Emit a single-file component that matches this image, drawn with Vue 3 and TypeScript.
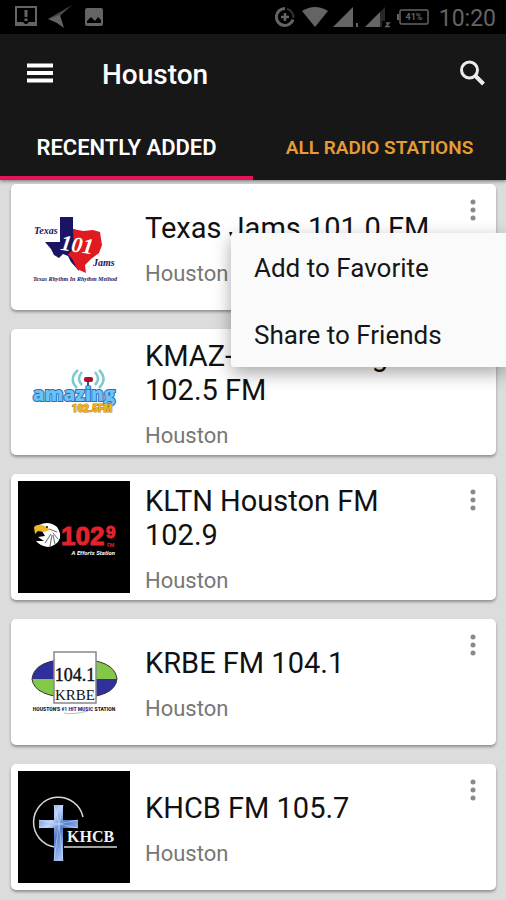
<script setup lang="ts">
import { ref } from 'vue'

type LogoName = 'texas' | 'amazing' | 'eagle' | 'krbe' | 'khcb'

interface Station {
  id: number
  name: string
  city: string
  logo: LogoName
  dark: boolean
}

const stations: Station[] = [
  { id: 1, name: 'Texas Jams 101.0 FM', city: 'Houston', logo: 'texas', dark: false },
  { id: 2, name: 'KMAZ-LP Amazing 102.5 FM', city: 'Houston', logo: 'amazing', dark: false },
  { id: 3, name: 'KLTN Houston FM 102.9', city: 'Houston', logo: 'eagle', dark: true },
  { id: 4, name: 'KRBE FM 104.1', city: 'Houston', logo: 'krbe', dark: false },
  { id: 5, name: 'KHCB FM 105.7', city: 'Houston', logo: 'khcb', dark: true },
]

const tabs = ['Recently added', 'All radio stations']
const activeTab = ref(0)
const openMenu = ref<number | null>(1)

function toggleMenu(id: number): void {
  openMenu.value = openMenu.value === id ? null : id
}
</script>

<template>
  <div class="app">
    <div class="status">
      <div class="status-group left">
        <svg width="24" height="24" viewBox="0 0 24 24">
          <path d="M2 2h20v18H2z" fill="none" stroke="currentColor" stroke-width="2" />
          <path d="M2 17h7l3 3 3-3h7v4H2z" fill="currentColor" />
          <path d="M10.500 5h3v7h-3zM10.500 13.500h3v2.500h-3z" fill="currentColor" />
        </svg>
        <svg width="24" height="24" viewBox="0 0 24 24">
          <path d="M0 14 24 0 12 11z" fill="currentColor" opacity=".7" />
          <path d="M0 14 12 10 16 23 9 18z" fill="currentColor" />
        </svg>
        <svg width="24" height="24" viewBox="0 0 24 24">
          <path fill-rule="evenodd" d="M5 3h14a2 2 0 0 1 2 2v14a2 2 0 0 1-2 2H5a2 2 0 0 1-2-2V5a2 2 0 0 1 2-2zM5 18h14v-3l-3-3-3 4-4-4-4 4z" fill="currentColor" />
        </svg>
      </div>
      <div class="status-group right">
        <svg width="22" height="24" viewBox="0 0 22 24">
          <path d="M10 3.500a8.500 8.500 0 1 0 8 11" fill="none" stroke="currentColor" stroke-width="3" />
          <path d="M12 4a8.500 8.500 0 0 1 6.500 9" fill="none" stroke="currentColor" stroke-width="2" opacity=".5" />
          <path d="M10 8v8M6 12h8" stroke="currentColor" stroke-width="2.500" />
        </svg>
        <svg width="26" height="24" viewBox="0 0 26 24">
          <path d="M0 6Q13-2 26 6L13 22z" fill="currentColor" />
        </svg>
        <svg width="27" height="24" viewBox="0 0 27 24">
          <path d="M0 22 20 2v20z" fill="currentColor" />
          <path d="M24 18v4" stroke="currentColor" stroke-width="2" />
        </svg>
        <svg width="27" height="24" viewBox="0 0 27 24">
          <path d="M0 22 15 7v15z" fill="currentColor" />
          <path d="M15 7 20 2v14h-3v6h-2z" fill="currentColor" opacity=".4" />
          <path d="M21 18h3L21 21.500h4" fill="none" stroke="currentColor" stroke-width="1.500" />
        </svg>
        <svg width="32" height="24" viewBox="0 0 32 24">
          <rect x="3" y="5" width="28" height="14" rx="1.500" fill="none" stroke="currentColor" stroke-width="1.500" />
          <path d="M1 9v6" stroke="currentColor" stroke-width="2" />
          <text x="17" y="15" text-anchor="middle" font-size="9" font-weight="700" fill="currentColor">41%</text>
        </svg>
        <span class="clock">10:20</span>
      </div>
    </div>

    <header class="header">
      <div class="toolbar">
        <button class="icon-button" type="button" aria-label="Open navigation">
          <svg width="28" height="28" viewBox="0 0 28 28">
            <path d="M1 6.500h26M1 14h26M1 21.500h26" stroke="#fff" stroke-width="4" />
          </svg>
        </button>
        <h1 class="title">Houston</h1>
        <button class="icon-button" type="button" aria-label="Search">
          <svg width="28" height="28" viewBox="0 0 28 28">
            <circle cx="11.500" cy="11" r="8" fill="none" stroke="#ececec" stroke-width="3" />
            <path d="m17 16.500 8.500 8.500" stroke="#ececec" stroke-width="4" />
          </svg>
        </button>
      </div>
      <nav class="tabs">
        <button
          v-for="(tab, index) in tabs"
          :key="tab"
          type="button"
          class="tab"
          :class="{ active: activeTab === index }"
          @click="activeTab = index"
        >
          {{ tab }}
        </button>
      </nav>
    </header>

    <main class="list">
      <article v-for="station in stations" :key="station.id" class="card">
        <div class="logo" :class="{ dark: station.dark }">
          <svg v-if="station.logo === 'texas'" viewBox="0 0 112 112">
            <path d="M42 26h13v12l6 2v40l-8-9-3-6-5-2-4 4-5-3-3-6-6-7h15z" fill="#1b1464" />
            <path d="M55 38l10 2 10-1 7 2 2 13-3 8-8 6-6 6 1 8-9-4-4-9-5-6 6-5z" fill="#e01a20" />
            <text x="59" y="61" text-anchor="middle" class="serif" font-size="22" font-style="italic" font-weight="700" fill="#fff" transform="rotate(8 59 54)">101</text>
            <text x="16" y="43" class="script" font-size="10" fill="#1b1464">Texas</text>
            <text x="75" y="75" class="script" font-size="10" fill="#1b1464">Jams</text>
            <text x="57" y="90" text-anchor="middle" class="script" font-size="6" fill="#1b1464">Texas Rhythm In Rhythm Method</text>
          </svg>

          <svg v-else-if="station.logo === 'amazing'" viewBox="0 0 112 112">
            <g fill="none" stroke="#7cc9d0" stroke-width="2.500">
              <path d="M64 49q-6-6 0-13M59 52q-9-9 1-18M77 49q6-6 0-13M81 52q9-9 0-18" />
            </g>
            <path d="M70 44v10" stroke="#245a9c" stroke-width="2" />
            <rect x="66" y="41" width="9" height="5" rx="2" fill="#b01023" />
            <text x="56" y="65" text-anchor="middle" class="amazing">amazing</text>
            <text x="74" y="76" text-anchor="middle" class="frequency">102.5FM</text>
          </svg>

          <svg v-else-if="station.logo === 'eagle'" viewBox="0 0 112 112">
            <path d="M21 44q10-5 18 2 4 6 3 11-3 8-12 9-8-1-12-6l8 0-6-4 7-1-3-5z" fill="#fff" />
            <path d="m27 62 6-9M32 65l2-11M37 63l-2-9M40 58l-5-6M39 51l-8-3" stroke="#666" stroke-width="1" />
            <path d="M16 46q5-5 14 1l2 2-6 2-6-1-3 3z" fill="#eeb62a" />
            <circle cx="29" cy="46" r="1" fill="#111" />
            <text x="43" y="64" class="red-digits" font-size="26">102</text>
            <text x="88" y="57" class="red-digits" font-size="17">9</text>
            <text x="89" y="66" font-size="5" font-weight="700" fill="#e3222b">FM</text>
            <text x="97" y="74" text-anchor="end" font-size="6" font-weight="700" font-style="italic" fill="#fff">A Efforts Station</text>
          </svg>

          <svg v-else-if="station.logo === 'krbe'" viewBox="0 0 112 112">
            <path d="M56 33v20H14Q16 33 56 33z" fill="#30309a" />
            <path d="M14 53h42v19Q16 71 14 53z" fill="#83c847" />
            <path d="M56 33q41 0 43 20H56z" fill="#83c847" />
            <path d="M56 53h43q-2 19-43 19z" fill="#30309a" />
            <path d="M14 53Q16 33 56 33q41 0 43 20-2 19-43 19Q16 71 14 53z" fill="none" stroke="#333" stroke-width="1" />
            <rect x="36" y="26" width="42" height="51" fill="#fff" stroke="#888" stroke-width="1.500" />
            <text x="57" y="55" text-anchor="middle" class="serif" font-size="18" fill="#111" stroke="#111" stroke-width=".4">104.1</text>
            <text x="57" y="74" text-anchor="middle" class="serif" font-size="15" fill="#111">KRBE</text>
            <path d="M46 87q8 2 24-2" fill="none" stroke="#a2d58d" stroke-width="1" />
            <text x="56" y="85" text-anchor="middle" font-size="5" font-weight="900" fill="#222">HOUSTON'S <tspan fill="#30309a">#1 HIT MUSIC</tspan> STATION</text>
          </svg>

          <svg v-else viewBox="0 0 112 112">
            <defs>
              <linearGradient id="cross-fill" x1="0" y1="0" x2="1" y2="1">
                <stop offset="0" stop-color="#5a83d0" />
                <stop offset=".3" stop-color="#bcd3fa" />
                <stop offset=".5" stop-color="#527ac5" />
                <stop offset=".75" stop-color="#a5c2f5" />
                <stop offset="1" stop-color="#5276bb" />
              </linearGradient>
            </defs>
            <path d="M65 46A25 25 0 1 0 37 76" fill="none" stroke="#d8d8d8" stroke-width="1.500" />
            <path d="M36 34h9v15h15v8H45v33h-9V57H21v-8h15z" fill="url(#cross-fill)" />
            <path d="m36 34 5 19 4-19M21 49l20 4-20 4M60 49l-19 4 19 4M36 90l5-37 4 37" fill="none" stroke="#dce8ff" stroke-width="1" opacity=".5" />
            <text x="49" y="71" class="serif" font-size="16" font-weight="700" fill="#f1f1f1">KHCB</text>
            <path d="M46 76h53" stroke="#d8d8d8" stroke-width="1.500" />
          </svg>
        </div>

        <div class="details">
          <h2 class="name">{{ station.name }}</h2>
          <p class="city">{{ station.city }}</p>
        </div>

        <button class="more" type="button" :aria-label="`Options for ${station.name}`" @click="toggleMenu(station.id)">
          <svg width="6" height="22" viewBox="0 0 6 22">
            <g fill="#8a8a8a">
              <circle cx="3" cy="3" r="2.500" />
              <circle cx="3" cy="11" r="2.500" />
              <circle cx="3" cy="19" r="2.500" />
            </g>
          </svg>
        </button>

        <div v-if="openMenu === station.id" class="menu">
          <button type="button" class="menu-item" @click="openMenu = null">Add to Favorite</button>
          <button type="button" class="menu-item" @click="openMenu = null">Share to Friends</button>
        </div>
      </article>
    </main>
  </div>
</template>

<style>
body {
  margin: 0;
  background: #dcdcdc;
}
</style>

<style scoped>
.app {
  min-height: 100vh;
  background: #dcdcdc;
  font-family: Roboto, "Liberation Sans", sans-serif;
  overflow-x: hidden;
}

button {
  border: 0;
  padding: 0;
  background: none;
  font: inherit;
  color: inherit;
  cursor: pointer;
}

svg {
  display: block;
}

.status {
  display: flex;
  justify-content: space-between;
  align-items: center;
  height: 34px;
  padding: 0 10px 0 14px;
  background: #000;
  color: #646464;
}

.status-group {
  display: flex;
  align-items: center;
}

.left {
  gap: 10px;
}

.right {
  gap: 5px;
}

.clock {
  margin-left: 5px;
  padding-top: 3px;
  font-size: 23px;
  line-height: 31px;
}

.header {
  position: relative;
  background: #171717;
  color: #fff;
  box-shadow: 0 1px 4px rgba(0, 0, 0, 0.5);
}

.toolbar {
  display: flex;
  align-items: center;
  height: 78px;
  padding: 0 20px 0 26px;
}

.title {
  flex: 1;
  margin: 0 0 0 48px;
  padding-top: 4px;
  font-size: 28px;
  font-weight: 500;
  line-height: 36px;
}

.tabs {
  display: grid;
  grid-template-columns: 1fr 1fr;
}

.tab {
  height: 68px;
  padding-top: 6px;
  border-bottom: 4px solid transparent;
  font-size: 19px;
  font-weight: 600;
  text-transform: uppercase;
  white-space: nowrap;
  color: #e69c35;
}

.tab.active {
  border-bottom-color: #e6135a;
  font-size: 22px;
  color: #fff;
}

.list {
  display: flex;
  flex-direction: column;
  gap: 19px;
  padding: 4px 10px 10px 11px;
}

.card {
  position: relative;
  display: flex;
  align-items: center;
  min-height: 126px;
  border-radius: 5px;
  background: #fff;
  box-shadow: 0 2px 3px rgba(0, 0, 0, 0.35);
}

.logo {
  flex: none;
  width: 112px;
  height: 112px;
  margin-left: 7px;
}

.logo.dark {
  background: #000;
}

.serif {
  font-family: "Liberation Serif", serif;
}

.script {
  font-family: "Liberation Serif", serif;
  font-style: italic;
  font-weight: 700;
}

.red-digits {
  font-family: "Liberation Sans", sans-serif;
  font-weight: 700;
  fill: #e3222b;
  stroke: #e3222b;
  stroke-width: 1px;
}

.amazing {
  font-family: "Open Sans", sans-serif;
  font-size: 19px;
  font-weight: 800;
  fill: #6fc0f3;
  stroke: #2a70b4;
  stroke-width: 2px;
  paint-order: stroke;
}

.frequency {
  font-size: 10px;
  font-weight: 900;
  fill: #f5b51d;
  stroke: #b17b12;
  stroke-width: 1px;
  paint-order: stroke;
}

.details {
  flex: 1;
  padding: 2px 52px 0 15px;
}

.name {
  margin: 0;
  font-size: 29px;
  font-weight: 400;
  line-height: 34px;
  color: #111;
}

.city {
  margin: 17px 0 0;
  font-size: 22px;
  line-height: 24px;
  color: #777;
}

.more {
  position: absolute;
  top: 8px;
  right: 12px;
  display: grid;
  place-items: center;
  width: 22px;
  height: 36px;
}

.menu {
  position: absolute;
  z-index: 2;
  top: 49px;
  right: -10px;
  left: 220px;
  border-radius: 3px 0 0 3px;
  background: #fafafa;
  box-shadow: 0 6px 18px rgba(0, 0, 0, 0.35);
}

.menu-item {
  display: block;
  width: 100%;
  height: 67px;
  padding: 2px 23px 0;
  text-align: left;
  font-size: 26px;
  color: #161616;
}
</style>
